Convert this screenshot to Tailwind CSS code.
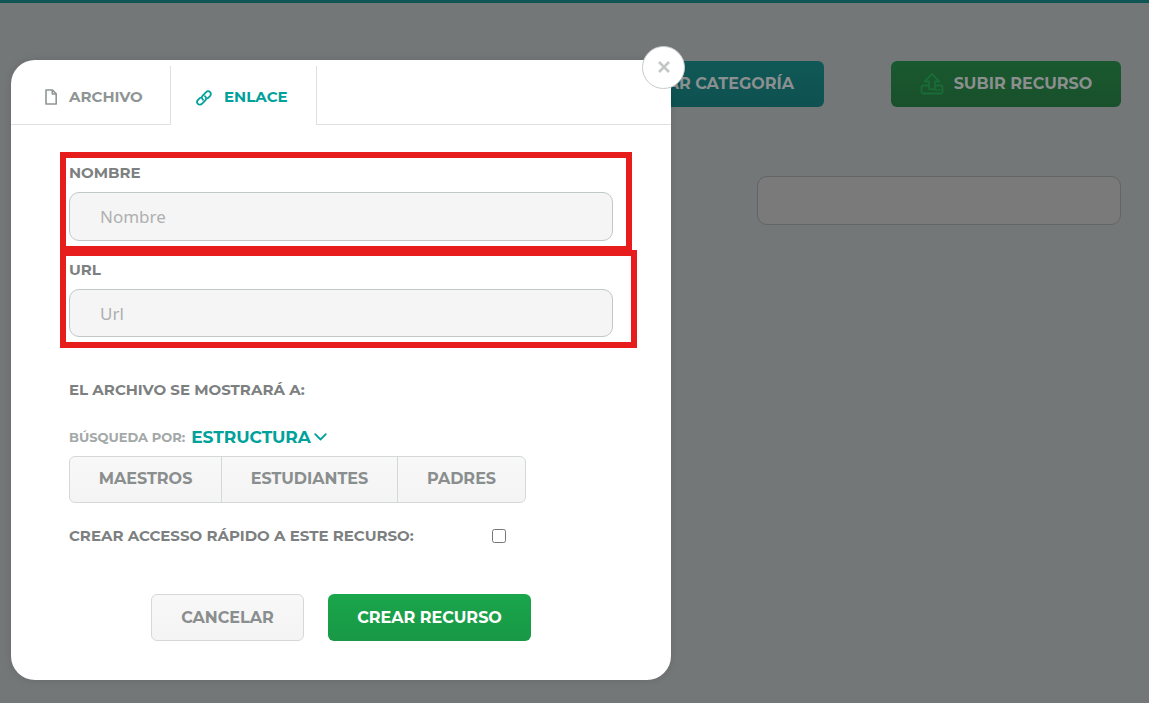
<!DOCTYPE html>
<html lang="es">
<head>
<meta charset="utf-8">
<meta name="viewport" content="width=device-width, initial-scale=1">
<title>Recursos</title>
<script src="https://cdn.jsdelivr.net/npm/@tailwindcss/browser@4"></script>
</head>
<body class="min-h-screen bg-[#737778] font-['Montserrat','Inter',sans-serif] font-bold text-[#7c8080]">

<header class="h-[3px] bg-[#0e5554]"></header>
<main class="flex flex-col items-end px-7 pt-[58px]">
  <div class="flex gap-[67px] text-base text-[#8c8f8f]">
    <button type="button" class="h-[46px] rounded-md bg-linear-to-b from-[#105857] to-[#0e5150] px-[30px]">CREAR CATEGORÍA</button>
    <button type="button" class="flex h-[46px] w-[230px] items-center justify-center gap-[10px] rounded-md bg-linear-to-b from-[#1a592f] to-[#18502b]">
      <svg class="h-6 w-6 shrink-0" viewBox="0 0 24 24" fill="none" stroke="#1a6c37" stroke-width="1.800" stroke-linejoin="round" aria-hidden="true">
        <path d="M8.500 13.500H3Q1.500 13.500 1.500 15V20Q1.500 21.500 3 21.500H21Q22.500 21.500 22.500 20V15Q22.500 13.500 21 13.500H15.500M9 9.500H4.500L12 2L19.500 9.500H15V16Q15 17.300 13.700 17.300H10.300Q9 17.300 9 16Z"/>
        <path d="M16 18h.6M19.200 18h.6" stroke-linecap="round"/>
      </svg>
      <span class="whitespace-nowrap">SUBIR RECURSO</span>
    </button>
  </div>
  <input type="search" aria-label="Buscar" class="mt-[69px] h-[49px] w-[364px] rounded-[10px] border border-[#626565] bg-[#7a7a7a] px-7 outline-none">
</main>

<div role="dialog" aria-label="Crear recurso" class="absolute top-[60px] left-[11px] w-[660px] rounded-3xl bg-white pb-[39px] shadow-[0_0_8px_rgba(0,0,0,0.1)]">
  <button type="button" aria-label="Cerrar" class="absolute -top-[14px] -right-[14px] flex h-[43px] w-[43px] items-center justify-center rounded-full border border-[#c6cbcb] bg-white pb-0.5">
    <svg class="h-3 w-3" viewBox="0 0 12 12" stroke="#c4c6c6" stroke-width="2.600" aria-hidden="true"><path d="M1 1l10 10M11 1L1 11"/></svg>
  </button>

  <div role="tablist" class="flex pt-[6px] text-[15px]">
    <button type="button" role="tab" aria-selected="false" class="flex h-[59px] w-[159px] items-center gap-3 border-b border-[#dfe1e1] pt-1 pl-[34px] text-[#8f9595]">
      <svg class="h-4 w-3 shrink-0" viewBox="0 0 12 16" fill="none" stroke="currentColor" stroke-width="1.600" stroke-linejoin="round" aria-hidden="true"><path d="M1 1h6.500L11.200 4.800V15H1zM7.300 1v4h4"/></svg>
      ARCHIVO
    </button>
    <button type="button" role="tab" aria-selected="true" class="flex h-[59px] w-[147px] items-center gap-3 border-x border-[#dfe1e1] pt-1 pl-[25px] text-[#00a19a]">
      <svg class="h-4 w-4 shrink-0" viewBox="0 0 16 16" fill="none" stroke="currentColor" stroke-width="1.800" stroke-linecap="round" aria-hidden="true">
        <path d="M7 9.800C5.500 8.400 5.500 6.700 6.900 5.300L9.900 2.300C11.200 1 13 1 14.100 2.100S15.100 5 13.800 6.300L11.600 8.400"/>
        <path d="M9 6.200C10.500 7.600 10.500 9.300 9.100 10.700L6.100 13.700C4.800 15 3 15 1.900 13.900S.9 11 2.200 9.700L4.400 7.600"/>
      </svg>
      ENLACE
    </button>
    <div class="grow border-b border-[#dfe1e1]"></div>
  </div>

  <form class="pl-[49px] pt-[27px] text-[15px]">
    <div class="flex w-[572px] flex-col gap-[9px] border-6 border-[#e71c1c] pt-[5px] pr-[13px] pb-[5px] pl-[3px]">
      <label for="nombre" class="leading-5">NOMBRE</label>
      <input id="nombre" type="text" placeholder="Nombre" class="h-[49px] w-full rounded-[10px] border border-[#c1c8c8] bg-[#f5f5f5] px-[30px] font-['Noto_Sans',sans-serif] text-[17px] font-normal outline-none placeholder:text-[#aeb0b0]">
    </div>
    <div class="-mt-[2px] flex w-[577px] flex-col gap-[9px] border-6 border-[#e71c1c] pt-1 pr-[18px] pb-[5px] pl-[3px]">
      <label for="url" class="leading-5">URL</label>
      <input id="url" type="text" placeholder="Url" class="h-12 w-full rounded-[10px] border border-[#c1c8c8] bg-[#f5f5f5] px-[30px] font-['Noto_Sans',sans-serif] text-[17px] font-normal outline-none placeholder:text-[#aeb0b0]">
    </div>

    <div class="pl-[9px]">
      <p class="mt-8 leading-5">EL ARCHIVO SE MOSTRARÁ A:</p>
      <div class="mt-[25px] flex items-center gap-[6px]">
        <label for="busqueda" class="text-[13px] leading-6 text-[#a3a8a8]">BÚSQUEDA POR:</label>
        <div class="relative">
          <select id="busqueda" class="block h-6 appearance-none pr-4 text-[17px] leading-6 text-[#00a19a] outline-none">
            <option>ESTRUCTURA</option>
          </select>
          <svg class="pointer-events-none absolute top-2 right-0 h-2 w-[13px]" viewBox="0 0 13 8" fill="none" stroke="#00a19a" stroke-width="1.800" stroke-linecap="round" stroke-linejoin="round" aria-hidden="true"><path d="M1.200 1.200l5.300 5.300 5.300-5.300"/></svg>
        </div>
      </div>
      <div class="mt-[7px] flex h-[47px] w-[457px] divide-x divide-[#d5d8d8] rounded-md border border-[#d5d8d8] bg-linear-to-b from-[#f8f8f8] to-[#f4f4f4] text-base text-[#8a8e8e]">
        <button type="button" class="w-[152px] pb-px">MAESTROS</button>
        <button type="button" class="w-[176px] pb-px">ESTUDIANTES</button>
        <button type="button" class="grow pb-px">PADRES</button>
      </div>
      <div class="mt-[23px] flex w-[437px] items-center justify-between">
        <label for="acceso" class="leading-5">CREAR ACCESSO RÁPIDO A ESTE RECURSO:</label>
        <input id="acceso" type="checkbox" class="h-[14px] w-[14px]">
      </div>
      <div class="mt-12 flex gap-6 pl-[82px] text-base">
        <button type="button" class="h-[47px] w-[153px] rounded-md border border-[#d5d8d8] bg-linear-to-b from-[#f8f8f8] to-[#f4f4f4] text-[#8a8e8e]">CANCELAR</button>
        <button type="submit" class="h-[47px] w-[203px] rounded-md bg-linear-to-b from-[#1aa64b] to-[#189846] text-white">CREAR RECURSO</button>
      </div>
    </div>
  </form>
</div>
</body>
</html>
